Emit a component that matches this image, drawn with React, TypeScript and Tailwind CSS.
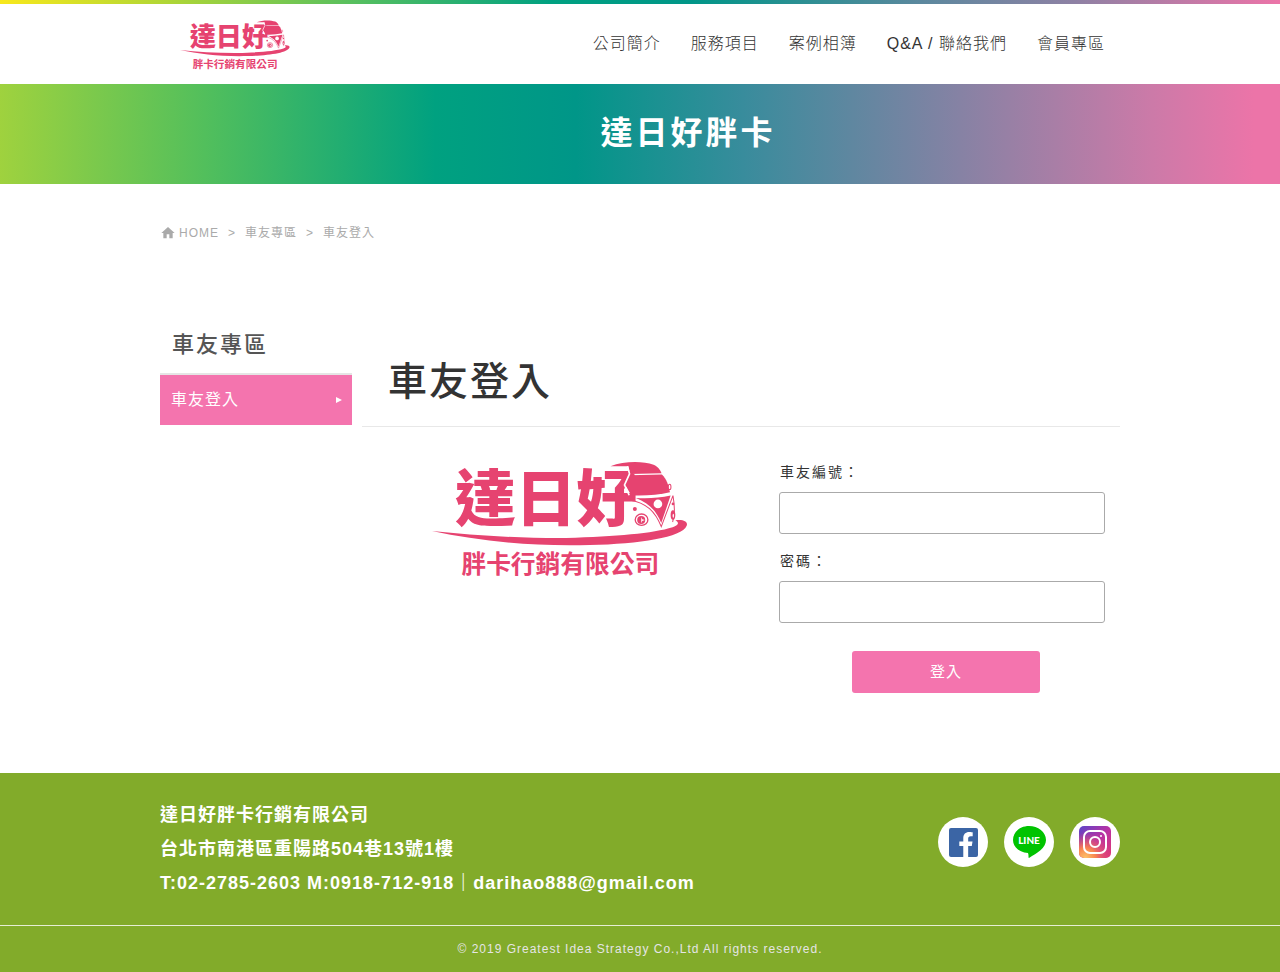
import { FaFacebookF } from "react-icons/fa";
import { MdHome } from "react-icons/md";

const navItems = ["公司簡介", "服務項目", "案例相簿", "Q&A / 聯絡我們", "會員專區"];

function Logo({ className }: { className: string }) {
  return (
    <svg
      viewBox="38 34 766 346"
      className={`overflow-visible tracking-normal ${className}`}
      role="img"
      aria-label="達日好胖卡行銷有限公司"
      fill="#e64370"
      fontFamily="'Noto Sans CJK TC', sans-serif"
      fontWeight="700"
    >
      <text x="106" y="213" fontSize="182" fontWeight="900">達日好</text>
      <text x="126" y="368" fontSize="74">胖卡行銷有限公司</text>
      {/* road */}
      <path d="M38 243 C160 256 300 265 440 264 C590 260 700 250 758 232 C776 225 779 218 766 211 C790 207 805 215 800 227 C786 262 660 281 510 285 C330 290 175 272 38 243 Z" />
      {/* van */}
      <path d="M572 49 C612 34 668 33 701 45 C715 51 721 61 725 70 L631 72 L625 49 Z" />
      <path d="M631 76 L726 74 C740 88 746 106 750 127 C714 135 674 138 634 136 L617 106 Z" />
      <path d="M623 49 L629 72 L614 105 L628 136" fill="none" stroke="white" strokeWidth="5" />
      <path d="M648 144 C682 147 718 144 752 137 L724 219 C710 184 688 159 648 144 Z" />
      <path d="M628 150 C680 158 706 185 724 230 L759 137 M759 137 C765 170 765 195 758 216" fill="none" stroke="#e64370" strokeWidth="3" />
      <circle cx="714" cy="162" r="13" fill="white" />
      <circle cx="645" cy="177" r="6" />
      <ellipse cx="665" cy="209" rx="19" ry="17" fill="white" stroke="#e64370" strokeWidth="4" />
      <circle cx="664" cy="210" r="12" />
      <path d="M664 201 L667 208 L675 210 L667 213 L664 220 Z" fill="white" />
      <ellipse cx="749" cy="111" rx="4" ry="8" fill="white" stroke="#e64370" strokeWidth="3" />
      <ellipse cx="759" cy="195" rx="7" ry="14" />
      <ellipse cx="760" cy="197" rx="2" ry="6" fill="white" />
      <circle cx="759" cy="162" r="4" />
    </svg>
  );
}

function LineIcon() {
  return (
    <svg viewBox="0 0 50 50" className="size-full tracking-normal" aria-hidden="true">
      <path d="M25 9 C34 9 42 15 42 23 C42 31 33 36 25 41 C24 41 25 38 24 36 C15 35 9 30 9 23 C9 15 16 9 25 9 Z" fill="#00c300" />
      <text x="25" y="27" textAnchor="middle" fontSize="10" fontWeight="900" fontFamily="Lato, sans-serif" fill="white">
        LINE
      </text>
    </svg>
  );
}

function InstagramIcon() {
  return (
    <svg viewBox="0 0 50 50" className="size-full" aria-hidden="true">
      <defs>
        <linearGradient id="ig-base" x1="0" y1="0" x2="1" y2="1">
          <stop offset="0" stopColor="#5a45c8" />
          <stop offset="0.5" stopColor="#b832a4" />
          <stop offset="1" stopColor="#e23a72" />
        </linearGradient>
        <radialGradient id="ig-warm" cx="0.2" cy="1" r="0.8">
          <stop offset="0" stopColor="#fdc468" />
          <stop offset="0.4" stopColor="#f88450" />
          <stop offset="1" stopColor="#e0407c" stopOpacity="0" />
        </radialGradient>
      </defs>
      <rect x="9" y="9" width="32" height="32" rx="5" fill="url(#ig-base)" />
      <rect x="9" y="9" width="32" height="32" rx="5" fill="url(#ig-warm)" />
      <g fill="none" stroke="white" strokeWidth="2">
        <rect x="14" y="14" width="22" height="22" rx="6" />
        <circle cx="25" cy="25" r="5" />
      </g>
      <circle cx="31" cy="19" r="1" fill="white" />
    </svg>
  );
}

export default function App() {
  return (
    <div className="bg-white font-['Liberation_Sans','Noto_Sans_CJK_TC',sans-serif] tracking-[1px] text-[#333]">
      <div className="h-1 bg-[linear-gradient(90deg,#f8e81c_0%,#b0d636_13%,#55bf60_28%,#00a181_43%,#009688_54%,#5c889e_72%,#8e81a4_84%,#ec74a8_100%)]" />
      <header className="mx-auto flex h-20 w-full max-w-[960px] items-center justify-between pt-0.5">
        <a href="#" className="ml-5">
          <Logo className="w-[110px]" />
        </a>
        <nav className="flex pb-0.5">
          {navItems.map((item) => (
            <a key={item} href="#" className="px-[15px] text-base leading-6 font-light">
              {item}
            </a>
          ))}
        </nav>
      </header>

      <div className="flex h-[100px] items-center justify-center bg-[linear-gradient(90deg,#9fd23e_0%,#52bf5c_16%,#00a180_34%,#009688_45%,#388c9c_58%,#8682a4_75%,#cc7aa8_90%,#ec74a8_98%)] pb-0.5 pl-24">
        <h1 className="text-[32px] font-bold tracking-[3px] text-white">達日好胖卡</h1>
      </div>

      <main className="mx-auto w-full max-w-[960px]">
        <nav className="flex items-center gap-[9px] pt-10 text-xs leading-[18px] text-[#aaa]">
          <a href="#" className="flex items-center gap-[3px]">
            <MdHome size={16} />
            HOME
          </a>
          <span>&gt;</span>
          <a href="#">車友專區</a>
          <span>&gt;</span>
          <span>車友登入</span>
        </nav>

        <div className="flex gap-[10px] pt-[73px] pb-20">
          <aside className="w-1/5 shrink-0">
            <h2 className="border-b-2 border-[#e5e5e5] px-3 pt-[13px] pb-[11px] text-[22px] leading-[34px] font-medium tracking-[2px] text-[#555]">
              車友專區
            </h2>
            <a href="#" className="flex h-[50px] items-center justify-between bg-[#f474ae] pr-[10px] pl-[11px] text-base text-white">
              車友登入
              <svg viewBox="0 0 6 6" className="size-1.5" fill="white" aria-hidden="true">
                <path d="M0 0 L6 3 L0 6 Z" />
              </svg>
            </a>
          </aside>

          <section className="grow">
            <h2 className="border-b border-[#e8e8e8] pt-[37px] pb-[15px] pl-[26px] text-[39px] leading-[59px] font-medium tracking-[2px]">
              車友登入
            </h2>
            <div className="flex gap-[21px] pt-[34px]">
              <div className="flex grow justify-center">
                <Logo className="h-[116px] w-64" />
              </div>
              <form className="mr-[15px] flex w-[326px] flex-col text-[15px]" onSubmit={(e) => e.preventDefault()}>
                <label htmlFor="member" className="pl-px text-sm leading-[22px] tracking-[2px]">車友編號：</label>
                <input id="member" type="text" className="mt-[9px] h-[42px] rounded-[3px] border border-[#aaa] px-3" />
                <label htmlFor="password" className="mt-4 pl-px text-sm leading-[22px] tracking-[2px]">密碼：</label>
                <input id="password" type="password" className="mt-[9px] h-[42px] rounded-[3px] border border-[#aaa] px-3" />
                <button type="submit" className="mt-7 ml-[73px] h-[42px] w-[188px] rounded-[3px] bg-[#f474ae] text-white">
                  登入
                </button>
              </form>
            </div>
          </section>
        </div>
      </main>

      <footer className="bg-[#82ab2a] text-white">
        <div className="mx-auto flex w-full max-w-[960px] items-center justify-between py-[25px]">
          <address className="text-lg leading-[34px] font-bold not-italic">
            <p>達日好胖卡行銷有限公司</p>
            <p>台北市南港區重陽路504巷13號1樓</p>
            <p>T:02-2785-2603 M:0918-712-918｜darihao888@gmail.com</p>
          </address>
          <div className="flex gap-4 pb-[14px]">
            <a href="#" aria-label="Facebook" className="flex size-[50px] items-center justify-center rounded-full bg-white">
              <span className="flex size-[29px] items-end justify-end overflow-hidden rounded-xs bg-[#3b65a5] pr-1">
                <FaFacebookF color="white" className="h-[25px] w-4" />
              </span>
            </a>
            <a href="#" aria-label="LINE" className="size-[50px] rounded-full bg-white">
              <LineIcon />
            </a>
            <a href="#" aria-label="Instagram" className="size-[50px] rounded-full bg-white">
              <InstagramIcon />
            </a>
          </div>
        </div>
        <p className="border-t border-[#e6eed4] py-[14px] text-center text-xs leading-[18px] text-[#e5e5e5]">
          © 2019 Greatest Idea Strategy Co.,Ltd All rights reserved.
        </p>
      </footer>
    </div>
  );
}
